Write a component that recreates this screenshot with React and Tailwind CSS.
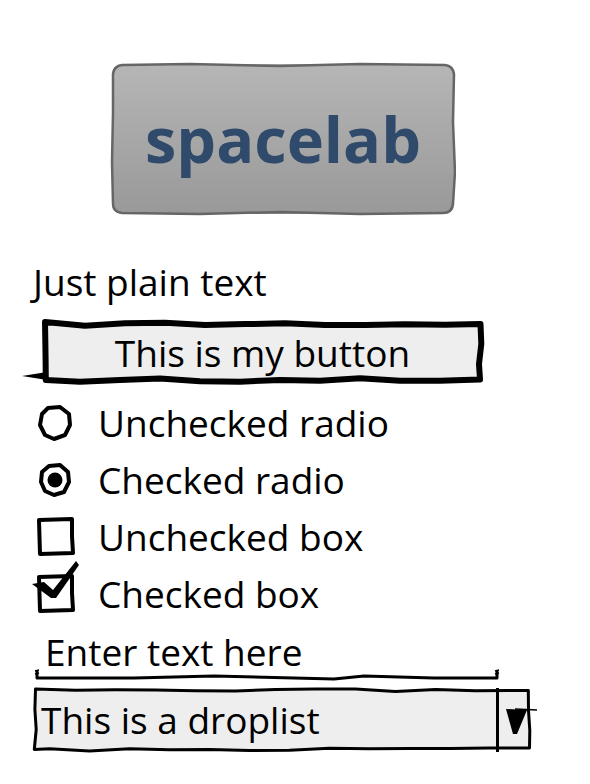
import React from 'react';

// deterministic jitter so every render is identical
function rng(seed) {
  let s = seed;
  return () => {
    s = (s * 16807) % 2147483647;
    return (s - 1) / 2147483646;
  };
}

function wobblyRect(w, h, inset, amp, seed, step = 40) {
  const r = rng(seed);
  const j = () => (r() - 0.5) * 2 * amp;
  const pts = [];
  const x0 = inset, y0 = inset, x1 = w - inset, y1 = h - inset;
  for (let x = x0; x < x1; x += step) pts.push([x, y0 + j()]);
  for (let y = y0; y < y1; y += step / 2) pts.push([x1 + j(), y]);
  for (let x = x1; x > x0; x -= step) pts.push([x, y1 + j()]);
  for (let y = y1; y > y0; y -= step / 2) pts.push([x0 + j(), y]);
  return 'M' + pts.map(p => p[0].toFixed(1) + ' ' + p[1].toFixed(1)).join(' L') + ' Z';
}

function SketchBox({ w, h, stroke, width, amp, seed, className = '', extra, children }) {
  return (
    <div className={`relative ${className}`} style={{ width: w, height: h }}>
      {children}
      <svg className="absolute inset-0 overflow-visible" width={w} height={h}>
        <path d={wobblyRect(w, h, width / 2 + 1, amp, seed)} fill="none" stroke={stroke} strokeWidth={width} strokeLinejoin="round" />
        {extra}
      </svg>
    </div>
  );
}

function RadioIcon({ checked }) {
  if (checked) {
    return (
      <svg width="38" height="38" viewBox="0 0 38 38">
        <path d="M13 5 L24 4 L32 11 L33 21 L28 31 L18 34 L9 30 L5 21 L6 11 Z" fill="none" stroke="#000" strokeWidth="4" strokeLinejoin="round" />
        <circle cx="19" cy="19" r="7.5" fill="#000" />
      </svg>
    );
  }
  return (
    <svg width="38" height="38" viewBox="0 0 38 38">
      <path d="M12 4 L24 3 L33 10 L34 21 L29 31 L18 35 L9 31 L4 21 L6 10 Z" fill="none" stroke="#000" strokeWidth="4" strokeLinejoin="round" />
    </svg>
  );
}

function BoxIcon({ checked }) {
  return (
    <svg width="46" height="46" viewBox="0 0 46 46" className="overflow-visible">
      <path d="M7 6 L40 5 L40 22 L41 39 L8 40 L7 6 Z" fill="none" stroke="#000" strokeWidth="4" strokeLinejoin="round" />
      {checked && (
        <path d="M0 13 L12 11 L21 19 L44 -10 L47 -6 L24 27 L19 27 Z" fill="#000" />
      )}
    </svg>
  );
}

const rows = [
  { icon: <RadioIcon />, label: 'Unchecked radio' },
  { icon: <RadioIcon checked />, label: 'Checked radio' },
  { icon: <BoxIcon />, label: 'Unchecked box' },
  { icon: <BoxIcon checked />, label: 'Checked box' },
];

export default function App() {
  return (
    <div className="w-[590px] h-[784px] bg-white text-black pl-[33px] pt-[62px] flex flex-col items-start" style={{ fontFamily: '"Open Sans", "Noto Sans", sans-serif' }}>
      <div className="relative ml-[77px] w-[346px] h-[154px]">
        <div className="absolute inset-[2px] rounded-[10px] bg-gradient-to-b from-[#b6b6b6] to-[#999999]" />
        <svg className="absolute inset-0" width="346" height="154">
          <path d="M12 3 L80 2 L170 4 L250 2 L335 3 Q343 4 344 12 L343 60 L345 110 L343 142 Q342 151 333 151 L250 152 L170 150 L90 152 L12 151 Q3 150 3 142 L2 100 L3 50 L3 12 Q4 4 12 3 Z" fill="none" stroke="#666" strokeWidth="2.5" strokeLinejoin="round" />
        </svg>
        <div className="relative h-full flex items-center justify-center">
          <span className="text-[63px] font-bold text-[#2f4a6b] leading-none pb-[2px]">spacelab</span>
        </div>
      </div>

      <div className="mt-[46px] text-[37px] leading-[40px]">Just plain text</div>

      <SketchBox
        w={443}
        h={64}
        stroke="#000"
        width={6}
        amp={2}
        seed={7}
        className="ml-[8px] mt-[18px]"
        extra={<path d="M6 52 L-19 56 L6 60 Z" fill="#000" />}
      >
        <div className="absolute inset-[4px] bg-[#eeeeee] rounded-[6px]" />
        <div className="relative h-full flex items-center justify-center text-[37px] pt-[1px]">This is my button</div>
      </SketchBox>

      <div className="mt-[10px] flex flex-col">
        {rows.map(r => (
          <div key={r.label} className="h-[57px] flex items-center">
            <div className="w-[46px] flex justify-center -ml-[1px] mr-[20px]">{r.icon}</div>
            <span className="text-[37px] leading-none">{r.label}</span>
          </div>
        ))}
      </div>

      <div className="relative w-[466px] h-[59px] ml-[1px]">
        <div className="pl-[11px] text-[37px] leading-[40px] pt-[10px]">Enter text here</div>
        <svg className="absolute left-0 bottom-0" width="466" height="16">
          <path d="M3 6 L3 13 L100 13 L180 11 L300 14 L330 11 L400 13 L463 13 L463 6" fill="none" stroke="#000" strokeWidth="3" strokeLinejoin="round" />
          <path d="M1 6 L5 5 M1 9 L5 8 M461 6 L465 5 M461 9 L465 8" stroke="#000" strokeWidth="1.5" />
        </svg>
      </div>

      <SketchBox w={499} h={64} stroke="#000" width={3} amp={1.5} seed={3} className="mt-[7px]">
        <div className="absolute inset-[3px] bg-[#eeeeee]" />
        <div className="relative h-full flex items-center">
          <span className="flex-1 pl-[8px] text-[37px] leading-none pb-[2px]">This is a droplist</span>
          <div className="relative w-[36px] h-full border-l-[3px] border-black flex items-center justify-center">
            <svg width="30" height="34" viewBox="0 0 30 34" className="overflow-visible">
              <path d="M5 6 L26 7 L16 31 L12 31 Z" fill="#000" />
              <path d="M14 6 L36 7" stroke="#000" strokeWidth="1.5" />
            </svg>
          </div>
        </div>
      </SketchBox>
    </div>
  );
}
